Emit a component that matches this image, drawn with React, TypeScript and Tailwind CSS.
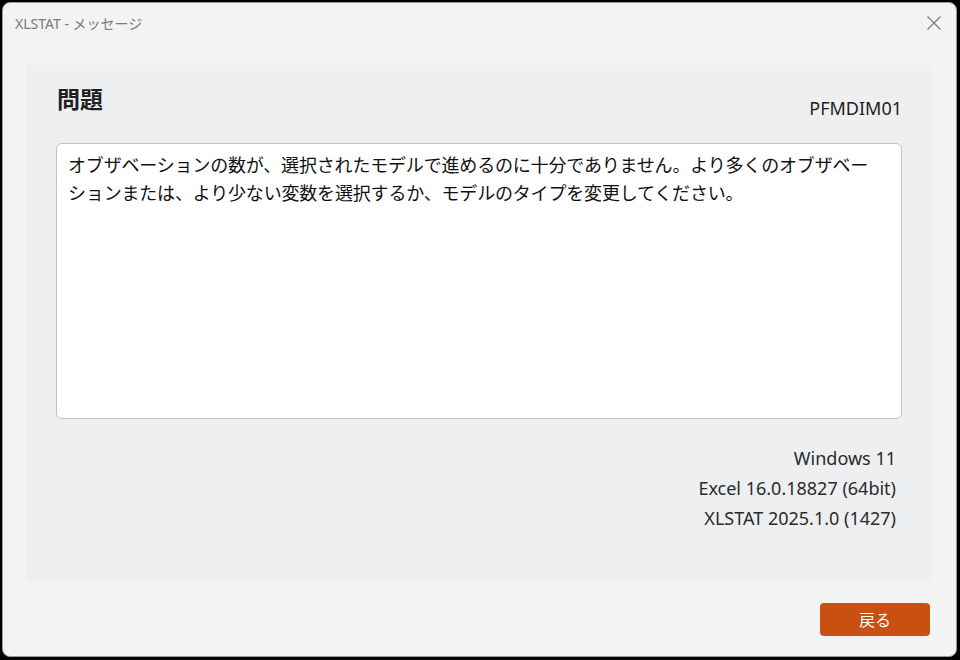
const font = "font-['Noto_Sans','Noto_Sans_CJK_JP',sans-serif]";

function CloseIcon() {
  return (
    <svg width="16" height="16" viewBox="0 0 16 16" className="text-[#7a7a7a]">
      <path d="M1.5 1.5 L14.5 14.5 M14.5 1.5 L1.5 14.5" stroke="currentColor" strokeWidth="1.2" fill="none" />
    </svg>
  );
}

export default function App() {
  return (
    <div className={`h-[660px] w-[960px] bg-black pt-[2px] pr-[3px] pb-[3px] pl-[2px] ${font}`}>
      <div className="flex h-full w-full flex-col overflow-hidden rounded-lg border border-[#9a9a9a] bg-[#f3f3f3]">
        {/* タイトルバー */}
        <div className="flex h-[40px] shrink-0 items-center justify-between pl-[12px] pr-[14px]">
          <span className="text-[14px] text-[#7a7a7a]">XLSTAT - メッセージ</span>
          <CloseIcon />
        </div>

        <div className="flex flex-1 flex-col pl-[23px] pr-[25px] pt-[22px]">
          {/* メッセージパネル */}
          <div className="flex h-[517px] flex-col bg-[#eeeff1] pl-[30px] pr-[29px] pt-[19px]">
            <div className="flex items-start justify-between">
              <h1 className="pl-[1px] text-[23px] font-bold leading-[30px] text-[#1f1f1f]">問題</h1>
              <span className="mt-[12px] text-[18px] leading-[24px] text-[#1f1f1f]">PFMDIM01</span>
            </div>

            <div className="mt-[23px] h-[276px] rounded-md border border-[#c4c4c4] bg-white px-[11px] pt-[7px]">
              <p className="whitespace-nowrap text-[18px] leading-[28px] tracking-[-0.18px] text-[#111]">
                オブザベーションの数が、選択されたモデルで進めるのに十分でありません。より多くのオブザベー
                <br />
                ションまたは、より少ない変数を選択するか、モデルのタイプを変更してください。
              </p>
            </div>

            <div className="mt-[24px] flex flex-col items-end pr-[6px] text-[18px] leading-[30px] text-[#2b2b2b]">
              <span>Windows 11</span>
              <span>Excel 16.0.18827 (64bit)</span>
              <span>XLSTAT 2025.1.0 (1427)</span>
            </div>
          </div>

          {/* フッター */}
          <div className="flex justify-end pt-[21px] pr-[1px]">
            <button className="h-[33px] w-[110px] rounded-[4px] bg-[#c9500f] text-[16px] text-white">
              戻る
            </button>
          </div>
        </div>
      </div>
    </div>
  );
}
